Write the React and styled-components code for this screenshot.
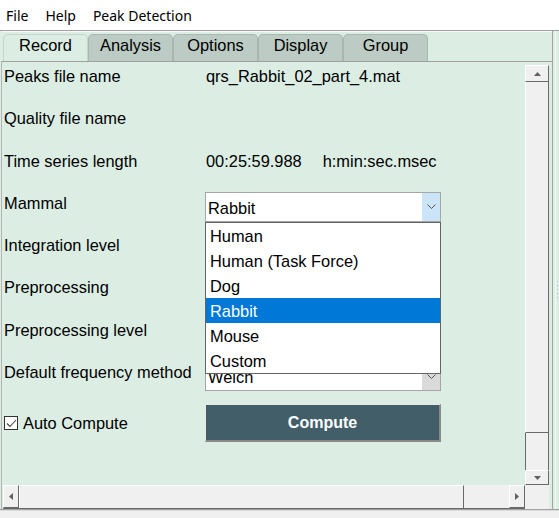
import React from 'react';
import styled, { createGlobalStyle } from 'styled-components';

const GREEN = '#dcede4';
const TAB_OFF = '#bccbc3';
const SB_BG = '#f0f0f0';
const SB_DARK = '#696969';
const FS = '16.4px';

const Global = createGlobalStyle`
  html, body { margin: 0; padding: 0; background: #fff; }
  body {
    width: 559px; height: 518px; overflow: hidden;
    font-family: "Liberation Sans", Arial, sans-serif;
    color: #000;
  }
  * { box-sizing: border-box; }
`;

const Screen = styled.div`
  width: 559px;
  height: 518px;
  display: flex;
  flex-direction: column;
`;

const MenuBar = styled.div`
  height: 30px;
  display: flex;
  align-items: center;
  gap: 17px;
  padding: 2px 0 0 6px;
  font-family: "Noto Sans", "Open Sans", sans-serif;
  font-size: 14px;
  background: #fff;
`;

const MenuItem = styled.span`
  line-height: 18px;
`;

const Window = styled.div`
  display: flex;
  height: 480px;
  border-top: 1px solid #a0a0a0;
  border-bottom: 1px solid #a0a0a0;
  background: ${GREEN};
`;

const Frame = styled.div`
  width: 553px;
  display: flex;
  flex-direction: column;
  padding-left: 1px;
  border-right: 1px solid #a3a3a3;
`;

const Splitter = styled.div`
  flex: 1;
  position: relative;
  border-left: 2px solid ${GREEN};
  box-shadow: inset 1px 0 0 #f4faf7;
  display: flex;
  align-items: center;
  justify-content: flex-end;
  padding-right: 1px;
`;

const Grip = styled.div`
  width: 1px;
  height: 18px;
  margin-top: 40px;
  background: repeating-linear-gradient(to bottom, #b8c4be 0 1px, transparent 1px 4px);
`;

const TabStrip = styled.div`
  height: 30px;
  display: flex;
  align-items: flex-end;
  padding-left: 2px;
  box-shadow: inset 0 1px 0 #f5faf7;
`;

const Tab = styled.div`
  width: 85px;
  height: 27px;
  padding-top: 1px;
  text-align: center;
  font-size: ${FS};
  line-height: 18px;
  background: ${p => (p.$active ? GREEN : TAB_OFF)};
  border: 1px solid ${p => (p.$active ? '#c6d4cd' : '#a8b7b0')};
  border-bottom: none;
  border-radius: 5px 5px 0 0;
`;

const Panel = styled.div`
  flex: 1;
  display: flex;
  flex-direction: column;
  border-top: 1px solid #a0a0a0;
  border-left: 1px solid #b4b4b4;
`;

const Body = styled.div`
  flex: 1;
  display: flex;
  min-height: 0;
`;

const Content = styled.div`
  flex: 1;
  position: relative;
  padding-left: 2px;
`;

const Row = styled.div`
  height: 42.3px;
  display: grid;
  grid-template-columns: 201px 236px;
  align-items: ${p => (p.$center ? 'center' : 'start')};
  padding-top: ${p => (p.$center ? '3px' : '0')};
`;

const Label = styled.div`
  font-size: ${FS};
  line-height: 18px;
  padding-top: 5px;
  white-space: nowrap;
`;

const Value = styled.div`
  font-size: ${FS};
  line-height: 18px;
  padding-top: 5px;
  padding-left: 1px;
  white-space: nowrap;
  display: flex;
  gap: 21px;
`;

const SelectWrap = styled.div`
  position: relative;
  margin-top: 3px;
`;

const SelectBox = styled.div`
  height: 30px;
  display: flex;
  align-items: center;
  background: #fff;
  border: 1px solid #a6a6a6;
  font-size: ${FS};
  padding-left: 2px;
`;

const SelectText = styled.span`
  flex: 1;
  line-height: 18px;
  padding-top: 2px;
  white-space: nowrap;
  overflow: hidden;
`;

const ArrowBox = styled.div`
  width: 18px;
  align-self: stretch;
  display: flex;
  align-items: center;
  justify-content: center;
  background: ${p => (p.$hover ? '#cce4f7' : '#dadada')};
`;

const DropList = styled.div`
  position: absolute;
  top: 100%;
  left: 0;
  width: 236px;
  background: #fff;
  border: 1px solid #646464;
  z-index: 10;
`;

const Option = styled.div`
  height: 25px;
  display: flex;
  align-items: center;
  padding: 2px 0 0 4px;
  font-size: ${FS};
  background: ${p => (p.$selected ? '#0078d7' : '#fff')};
  color: ${p => (p.$selected ? '#fff' : '#000')};
`;

const CheckLabel = styled.label`
  display: flex;
  align-items: center;
  gap: 5px;
  font-size: ${FS};
  line-height: 18px;
`;

const CheckBox = styled.span`
  width: 14px;
  height: 14px;
  border: 1px solid #333;
  background: #fff;
  display: flex;
  align-items: center;
  justify-content: center;
`;

const ComputeButton = styled.button`
  height: 38px;
  width: 236px;
  background: #425e69;
  color: #fff;
  font-family: "Liberation Sans", Arial, sans-serif;
  font-weight: bold;
  font-size: 16px;
  border-style: solid;
  border-width: 1px 2px 2px 1px;
  border-color: #e8e8e8 #8a8a8a #8a8a8a #e8e8e8;
  padding: 0;
  cursor: default;
`;

const VScroll = styled.div`
  width: 24px;
  margin: 3px 3px 0 0;
  display: flex;
  flex-direction: column;
  background: ${SB_BG};
`;

const SBButton = styled.div`
  flex: none;
  display: flex;
  align-items: center;
  justify-content: center;
  background: ${SB_BG};
  border-style: solid;
  border-width: 1px;
  border-color: #fff ${SB_DARK} ${SB_DARK} #fff;
`;

const VButton = styled(SBButton)`
  height: ${p => p.$h}px;
`;

const HButton = styled(SBButton)`
  width: 16px;
`;

const VThumb = styled.div`
  height: 351px;
  background: ${SB_BG};
  border-style: solid;
  border-width: 0 1px 1px 1px;
  border-color: #fff ${SB_DARK} ${SB_DARK} #fff;
`;

const VTrack = styled.div`
  flex: 1;
  background: ${SB_BG};
  border-left: 1px solid ${SB_DARK};
  border-right: 1px solid ${SB_DARK};
`;

const HBar = styled.div`
  height: 24px;
  display: flex;
`;

const HScroll = styled.div`
  flex: 1;
  margin-left: 1px;
  display: flex;
  background: ${SB_BG};
  border-bottom: 1px solid ${SB_DARK};
`;

const HThumb = styled.div`
  width: 445px;
  background: ${SB_BG};
  border-style: solid;
  border-width: 1px 1px 0 1px;
  border-color: #fff ${SB_DARK} ${SB_DARK} #fff;
`;

const HTrack = styled.div`
  flex: 1;
  background: ${SB_BG};
`;

const Corner = styled.div`
  width: 24px;
  margin-right: 3px;
  background: ${SB_BG};
`;

const Footer = styled.div`
  flex: 1;
  background: #f0f0f0;
  border-top: 1px solid #dcdcdc;
`;

const Triangle = ({ dir }) => {
  const pts = {
    up: '0,4 7,4 3.5,0',
    down: '0,0 7,0 3.5,4',
    left: '4,0 4,7 0,3.5',
    right: '0,0 0,7 4,3.5',
  }[dir];
  const vertical = dir === 'up' || dir === 'down';
  return (
    <svg width={vertical ? 7 : 4} height={vertical ? 4 : 7} viewBox={vertical ? '0 0 7 4' : '0 0 4 7'}>
      <polygon points={pts} fill="#606060" />
    </svg>
  );
};

const Chevron = () => (
  <svg width="9" height="5" viewBox="0 0 9 5">
    <polyline points="0.5,0.5 4.5,4.5 8.5,0.5" fill="none" stroke="#555" strokeWidth="1" />
  </svg>
);

const Check = () => (
  <svg width="11" height="9" viewBox="0 0 11 9">
    <polyline points="1,4.5 4,7.5 10,1" fill="none" stroke="#444" strokeWidth="1.1" />
  </svg>
);

const tabs = ['Record', 'Analysis', 'Options', 'Display', 'Group'];
const mammals = ['Human', 'Human (Task Force)', 'Dog', 'Rabbit', 'Mouse', 'Custom'];

const Select = ({ value, hover, children }) => (
  <SelectWrap>
    <SelectBox>
      <SelectText>{value}</SelectText>
      <ArrowBox $hover={hover}>
        <Chevron />
      </ArrowBox>
    </SelectBox>
    {children}
  </SelectWrap>
);

export default function App() {
  return (
    <>
      <Global />
      <Screen>
        <MenuBar>
          <MenuItem>File</MenuItem>
          <MenuItem>Help</MenuItem>
          <MenuItem>Peak Detection</MenuItem>
        </MenuBar>
        <Window>
          <Frame>
            <TabStrip>
              {tabs.map((t, i) => (
                <Tab key={t} $active={i === 0}>{t}</Tab>
              ))}
            </TabStrip>
            <Panel>
              <Body>
                <Content>
                  <Row>
                    <Label>Peaks file name</Label>
                    <Value>qrs_Rabbit_02_part_4.mat</Value>
                  </Row>
                  <Row>
                    <Label>Quality file name</Label>
                    <Value />
                  </Row>
                  <Row>
                    <Label>Time series length</Label>
                    <Value>
                      <span>00:25:59.988</span>
                      <span>h:min:sec.msec</span>
                    </Value>
                  </Row>
                  <Row>
                    <Label>Mammal</Label>
                    <Select value="Rabbit" hover>
                      <DropList>
                        {mammals.map(m => (
                          <Option key={m} $selected={m === 'Rabbit'}>{m}</Option>
                        ))}
                      </DropList>
                    </Select>
                  </Row>
                  <Row>
                    <Label>Integration level</Label>
                    <Select value="" />
                  </Row>
                  <Row>
                    <Label>Preprocessing</Label>
                    <Select value="" />
                  </Row>
                  <Row>
                    <Label>Preprocessing level</Label>
                    <Select value="" />
                  </Row>
                  <Row>
                    <Label>Default frequency method</Label>
                    <Select value="Welch" />
                  </Row>
                  <Row $center>
                    <CheckLabel>
                      <CheckBox>
                        <Check />
                      </CheckBox>
                      <span>Auto Compute</span>
                    </CheckLabel>
                    <ComputeButton>Compute</ComputeButton>
                  </Row>
                </Content>
                <VScroll>
                  <VButton $h={17}>
                    <Triangle dir="up" />
                  </VButton>
                  <VThumb />
                  <VTrack />
                  <VButton $h={15}>
                    <Triangle dir="down" />
                  </VButton>
                </VScroll>
              </Body>
              <HBar>
                <HScroll>
                  <HButton>
                    <Triangle dir="left" />
                  </HButton>
                  <HThumb />
                  <HTrack />
                  <HButton>
                    <Triangle dir="right" />
                  </HButton>
                </HScroll>
                <Corner />
              </HBar>
            </Panel>
          </Frame>
          <Splitter>
            <Grip />
          </Splitter>
        </Window>
        <Footer />
      </Screen>
    </>
  );
}
